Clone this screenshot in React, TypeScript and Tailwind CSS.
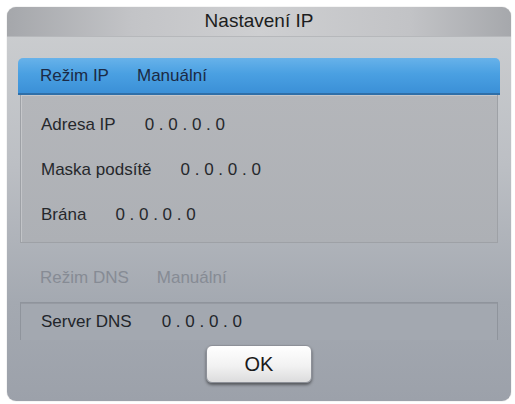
import React from "react";

const font = { fontFamily: '"Liberation Sans", Arial, sans-serif' };

function Row({ label, value }: { label: string; value: string }) {
  return (
    <div className="flex h-[45px] items-center pl-[20px] text-[17px] text-[#26282c]">
      <span>{label}</span>
      <span className="ml-[29px] whitespace-pre">{value}</span>
    </div>
  );
}

export default function App() {
  return (
    <div className="h-[404px] w-[515px] bg-white pl-[7px] pt-[7px]" style={font}>
      <div className="flex h-[394px] w-[504px] flex-col overflow-hidden rounded-[9px] bg-[linear-gradient(180deg,#cdcfd1_0%,#bcbfc4_40%,#a4a9b1_75%,#9ca1aa_100%)] shadow-[0_0_1px_rgba(0,0,0,0.4)]">
        {/* title bar */}
        <div className="flex h-[30px] items-center justify-center border-b border-[#b6b8bb] bg-[linear-gradient(90deg,#a5a7ab_0%,#c3c4c7_25%,#cecfd1_50%,#c2c3c6_80%,#a6a8ac_100%)] text-[19px] text-[#1c1d20]">
          Nastavení IP
        </div>

        <div className="flex flex-1 flex-col px-[11px] pt-[21px]">
          {/* selected item */}
          <div className="flex h-[37px] items-center rounded-t-[5px] border-b-2 border-[#2f6fa8] bg-[linear-gradient(180deg,#67b2ea_0%,#4aa0e2_45%,#3b90d7_100%)] pl-[22px] text-[17px] text-[#1b2a45]">
            <span>Režim IP</span>
            <span className="ml-[28px]">Manuální</span>
          </div>

          {/* address fields */}
          <div className="mx-[2px] flex h-[148px] flex-col border-x border-b border-[#9ea1a6] bg-[linear-gradient(180deg,#b4b6ba_0%,#adb0b5_100%)] pt-[7px] shadow-[inset_1px_1px_0_rgba(255,255,255,0.25)]">
            <Row label="Adresa IP" value="0 . 0 . 0 . 0" />
            <Row label="Maska podsítě" value="0 . 0 . 0 . 0" />
            <Row label="Brána" value="0 . 0 . 0 . 0" />
          </div>

          {/* DNS mode (disabled) */}
          <div className="flex h-[59px] items-center pl-[22px] pt-[11px] text-[17px] text-[#868b94]">
            <span>Režim DNS</span>
            <span className="ml-[28px]">Manuální</span>
          </div>

          <div className="mx-[2px] flex h-[38px] items-center border-x border-t border-[#8f949c] bg-[#a3a8b0] pl-[20px] text-[17px] text-[#22252a] shadow-[inset_0_1px_0_rgba(0,0,0,0.08)]">
            <span>Server DNS</span>
            <span className="ml-[30px] whitespace-pre">0 . 0 . 0 . 0</span>
          </div>

          <div className="flex justify-center pt-[5px]">
            <button className="flex h-[38px] w-[106px] items-center justify-center rounded-[6px] border border-[#8d9098] bg-[linear-gradient(180deg,#ffffff_0%,#f2f2f2_55%,#dcdcdd_100%)] text-[20px] text-[#1a1a1a] shadow-[0_2px_3px_rgba(0,0,0,0.45)]">
              OK
            </button>
          </div>
        </div>
      </div>
    </div>
  );
}
